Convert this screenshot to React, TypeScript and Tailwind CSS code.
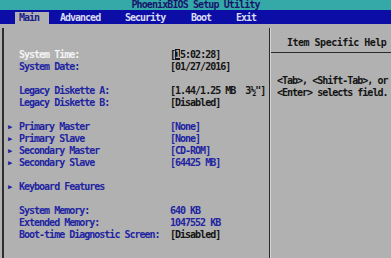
const rows: { label?: string; value?: string; arrow?: boolean; blueValue?: boolean; time?: boolean; selected?: boolean }[] = [
  { label: 'System Time:', time: true, selected: true },
  { label: 'System Date:', value: '[01/27/2016]' },
  {},
  { label: 'Legacy Diskette A:', value: '[1.44/1.25 MB  3½"]' },
  { label: 'Legacy Diskette B:', value: '[Disabled]' },
  {},
  { label: 'Primary Master', value: '[None]', arrow: true, blueValue: true },
  { label: 'Primary Slave', value: '[None]', arrow: true, blueValue: true },
  { label: 'Secondary Master', value: '[CD-ROM]', arrow: true, blueValue: true },
  { label: 'Secondary Slave', value: '[64425 MB]', arrow: true, blueValue: true },
  {},
  { label: 'Keyboard Features', arrow: true },
  {},
  { label: 'System Memory:', value: '640 KB', blueValue: true },
  { label: 'Extended Memory:', value: '1047552 KB', blueValue: true },
  { label: 'Boot-time Diagnostic Screen:', value: '[Disabled]' },
];

const menu = [
  { name: 'Main', ml: 'ml-[15px]', w: 'w-[34px]' },
  { name: 'Advanced', ml: 'ml-[11px]', w: 'w-[50px]' },
  { name: 'Security', ml: 'ml-[15px]', w: 'w-[50px]' },
  { name: 'Boot', ml: 'ml-[16px]', w: 'w-[30px]' },
  { name: 'Exit', ml: 'ml-[15px]', w: 'w-[30px]' },
];

export default function App() {
  return (
    <div
      className="w-[391px] h-[258px] overflow-hidden bg-[#b1b1b1] font-bold text-[10px] leading-[12px] tracking-[-1px] whitespace-pre"
      style={{ fontFamily: '"DejaVu Sans Mono", "Liberation Mono", monospace' }}
    >
      {/* Title bar */}
      <div className="h-[10px] bg-[#35a9a8] text-[#16166e] text-center leading-[10px] tracking-[-0.9px]">
        PhoenixBIOS Setup Utility
      </div>

      {/* Menu bar */}
      <div className="h-[14px] bg-[#0c0ca6] flex items-end">
        {menu.map((m, i) => (
          <div
            key={m.name}
            className={`${m.ml} ${m.w} h-[12px] leading-[12px] ${
              i === 0 ? 'bg-[#b1b1b1] text-[#1c1c8c] pl-[4px]' : 'text-[#d8dcf4]'
            }`}
          >
            {m.name}
          </div>
        ))}
      </div>

      {/* Body */}
      <div className="flex mt-[4px] h-[230px]">
        {/* Left panel */}
        <div className="w-[267px] ml-[2px] border-l-2 border-[#2e2e2e] pt-[21px]">
          {rows.map((r, i) => (
            <div key={i} className="flex h-[12px]">
              <span className="w-[15px] pl-[4px] text-[#2424a0] text-[7px]">{r.arrow ? '▶' : ''}</span>
              <span className={`w-[151px] ${r.selected ? 'text-[#f4f4f4]' : 'text-[#2224a2]'}`}>{r.label}</span>
              {r.time ? (
                <span className="text-[#141414]">
                  [<span className="bg-[#141414] text-[#b1b1b1]">1</span>5:02:28]
                </span>
              ) : (
                <span className={r.blueValue ? 'text-[#2224a2]' : 'text-[#141414]'}>{r.value}</span>
              )}
            </div>
          ))}
        </div>

        {/* Right panel */}
        <div className="flex-1 flex">
          <div className="w-[1px] bg-[#2a2a2a]" />
          <div className="w-[1px] bg-[#d4d4d4]" />
          <div className="flex-1">
            <div className="h-[25px] border-b border-[#2a2a2a] pl-[16px] pt-[9px] text-[#141414] tracking-[-0.5px]">
              Item Specific Help
            </div>
            <div className="pt-[22px] pl-[6px] text-[#141414]">
              <div>&lt;Tab&gt;, &lt;Shift-Tab&gt;, or</div>
              <div>&lt;Enter&gt; selects field.</div>
            </div>
          </div>
        </div>
      </div>
    </div>
  );
}
